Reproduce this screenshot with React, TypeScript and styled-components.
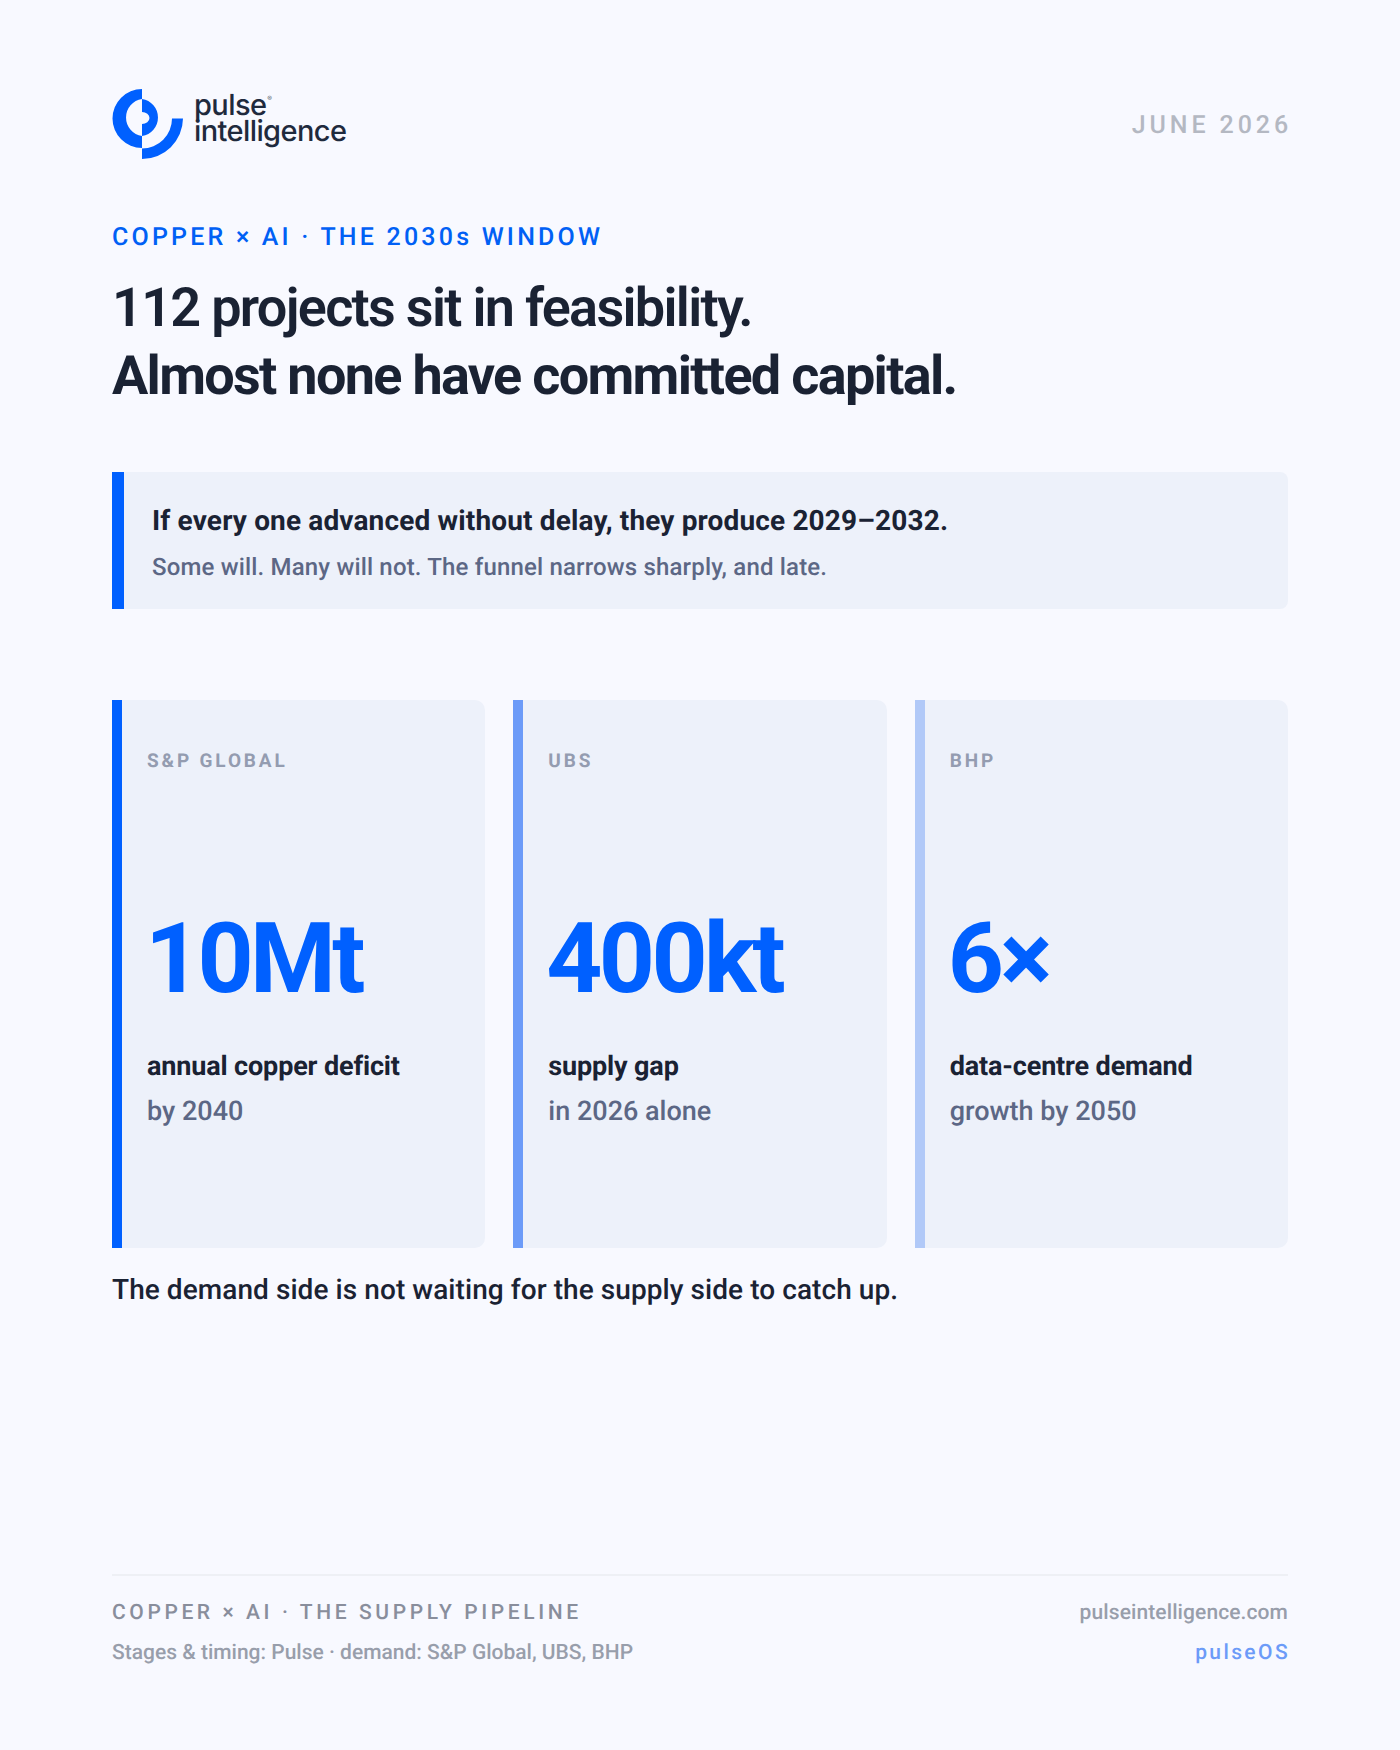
import styled, { createGlobalStyle } from 'styled-components'

const GlobalStyle = createGlobalStyle`
    html, body {
        margin: 0;
        padding: 0;
        background: #f8f9ff;
    }
    * {
        box-sizing: border-box;
    }
`

const Page = styled.div`
    width: 1400px;
    height: 1750px;
    padding: 89px 112px 0;
    background: #f8f9ff;
    font-family: Roboto, "Liberation Sans", sans-serif;
    text-rendering: geometricPrecision;
    display: flex;
    flex-direction: column;
`

const Header = styled.header`
    height: 70px;
    display: flex;
    justify-content: space-between;
    align-items: center;
`

const Logo = styled.div`
    display: flex;
    align-items: center;
    gap: 10px;
`

const LogoWords = styled.div`
    font-family: Inter, sans-serif;
    font-size: 29px;
    line-height: 26px;
    font-weight: 500;
    letter-spacing: -0.6px;
    color: #1f2a3d;
    margin-top: -12px;
`

const LogoMark = styled.sup`
    font-size: 7px;
    line-height: 0;
    vertical-align: 14px;
    color: #6b7280;
    margin-left: 1px;
`

const DateLabel = styled.div`
    margin: 2px -4px 0 0;
    font-size: 25px;
    font-weight: 500;
    letter-spacing: 3.9px;
    color: #b4b8c2;
`

const Eyebrow = styled.div`
    margin-top: 64px;
    font-size: 25px;
    line-height: 30px;
    font-weight: 500;
    letter-spacing: 3.2px;
    color: #0060f5;
`

const Title = styled.h1`
    margin: 22px 0 0;
    font-size: 54px;
    line-height: 68px;
    letter-spacing: -1.7px;
    color: #1a2233;
    font-weight: 600;
`

const TitleStrong = styled.span`
    display: block;
    font-weight: 700;
`

const Callout = styled.section`
    margin-top: 61px;
    height: 137px;
    padding: 32px 28px 0;
    background: #edf1fa;
    border-left: 12px solid #0060ff;
    border-radius: 0 8px 8px 0;
`

const CalloutHead = styled.div`
    font-size: 28px;
    line-height: 34px;
    font-weight: 700;
    letter-spacing: 0.15px;
    color: #1a2233;
`

const CalloutSub = styled.div`
    margin-top: 14px;
    font-size: 24px;
    line-height: 30px;
    font-weight: 500;
    letter-spacing: 0.17px;
    color: #5c6785;
`

const Cards = styled.section`
    margin-top: 91px;
    display: grid;
    grid-template-columns: repeat(3, 1fr);
    gap: 28px;
`

const Card = styled.article<{ $bar: string }>`
    height: 548px;
    padding: 48px 25px 0;
    background: #edf1fa;
    border-left: 10px solid ${(p) => p.$bar};
    border-radius: 0 10px 10px 0;
`

const Source = styled.div`
    font-size: 19px;
    line-height: 26px;
    font-weight: 700;
    letter-spacing: 2.85px;
    color: #949cb0;
`

const BigValue = styled.div`
    margin-top: 129px;
    margin-left: -2px;
    font-size: 98px;
    line-height: 112px;
    font-weight: 700;
    letter-spacing: -3.7px;
    color: #0060ff;
`

const CardLabel = styled.div`
    margin-top: 34px;
    font-size: 27px;
    line-height: 34px;
    font-weight: 700;
    letter-spacing: -0.15px;
    color: #1a2233;
`

const CardSub = styled.div`
    margin-top: 11px;
    font-size: 27px;
    line-height: 34px;
    font-weight: 500;
    color: #5c6785;
`

const Closing = styled.p`
    margin: 25px 0 0;
    font-size: 28px;
    line-height: 34px;
    font-weight: 500;
    letter-spacing: 0.07px;
    color: #1a2233;
`

const Footer = styled.footer`
    margin-top: auto;
    margin-bottom: 83px;
    padding-top: 23px;
    border-top: 2px solid #eef0f5;
    display: flex;
    justify-content: space-between;
`

const FooterCol = styled.div<{ $right?: boolean }>`
    display: flex;
    flex-direction: column;
    gap: 12px;
    align-items: ${(p) => (p.$right ? 'flex-end' : 'flex-start')};
`

const FooterTitle = styled.div`
    font-size: 21px;
    line-height: 28px;
    font-weight: 500;
    letter-spacing: 3.6px;
    color: #898e9c;
`

const FooterText = styled.div`
    font-size: 21px;
    line-height: 28px;
    font-weight: 500;
    color: #989eab;
`

const FooterLink = styled(FooterText)`
    letter-spacing: 0.1px;
`

const FooterBrand = styled.div`
    margin-right: -2px;
    font-size: 21px;
    line-height: 28px;
    font-weight: 500;
    letter-spacing: 2.4px;
    color: #6c9bf8;
`

const stats = [
    { source: 'S&P GLOBAL', value: '10Mt', label: 'annual copper deficit', sub: 'by 2040', bar: '#0060ff' },
    { source: 'UBS', value: '400kt', label: 'supply gap', sub: 'in 2026 alone', bar: '#6c9bf8' },
    { source: 'BHP', value: '6×', label: 'data-centre demand', sub: 'growth by 2050', bar: '#b1c9f8' },
]

const PulseIcon = () => (
    <svg width="72" height="70" viewBox="0 0 72 70" fill="#0060ff">
        <path d="M30 0 A29.5 29.5 0 0 0 30 59 V47 A18.7 18.7 0 0 1 30 10 Z" />
        <path d="M30 10 A18.7 18.7 0 0 1 30 47 V35 A7.5 6 0 0 0 30 23 Z" />
        <path d="M71 29.5 A41 41 0 0 1 30 70 V59.5 A30 30 0 0 0 60 29.5 Z" />
    </svg>
)

const App = () => {
    return (
        <Page>
            <GlobalStyle />
            <Header>
                <Logo>
                    <PulseIcon />
                    <LogoWords>
                        pulse<LogoMark>®</LogoMark>
                        <br />
                        intelligence
                    </LogoWords>
                </Logo>
                <DateLabel>JUNE 2026</DateLabel>
            </Header>

            <Eyebrow>COPPER × AI · THE 2030s WINDOW</Eyebrow>
            <Title>
                112 projects sit in feasibility.
                <TitleStrong>Almost none have committed capital.</TitleStrong>
            </Title>

            <Callout>
                <CalloutHead>If every one advanced without delay, they produce 2029–2032.</CalloutHead>
                <CalloutSub>Some will. Many will not. The funnel narrows sharply, and late.</CalloutSub>
            </Callout>

            <Cards>
                {stats.map((item) => (
                    <Card $bar={item.bar} key={item.source}>
                        <Source>{item.source}</Source>
                        <BigValue>{item.value}</BigValue>
                        <CardLabel>{item.label}</CardLabel>
                        <CardSub>{item.sub}</CardSub>
                    </Card>
                ))}
            </Cards>

            <Closing>The demand side is not waiting for the supply side to catch up.</Closing>

            <Footer>
                <FooterCol>
                    <FooterTitle>COPPER × AI · THE SUPPLY PIPELINE</FooterTitle>
                    <FooterText>Stages &amp; timing: Pulse · demand: S&amp;P Global, UBS, BHP</FooterText>
                </FooterCol>
                <FooterCol $right>
                    <FooterLink>pulseintelligence.com</FooterLink>
                    <FooterBrand>pulseOS</FooterBrand>
                </FooterCol>
            </Footer>
        </Page>
    )
}

export default App
